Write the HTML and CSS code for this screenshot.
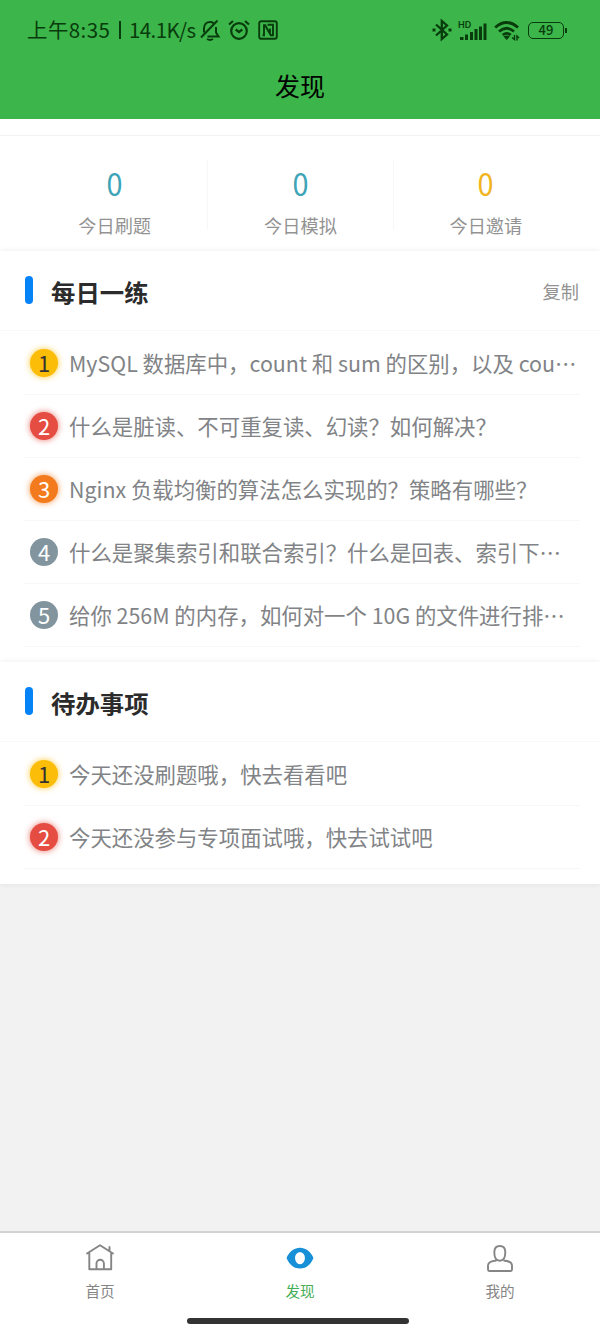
FILE: index.html
```html
<!DOCTYPE html>
<html lang="zh-CN">
<head>
<meta charset="utf-8">
<title>发现</title>
<link rel="stylesheet" href="styles.css">
</head>
<body>
<div class="app">
  <header class="top">
    <div class="status">
      <div class="status-left">
        <span class="time">上午8:35</span><span class="bar"></span><span class="speed">14.1K/s</span>
        <svg class="ic-bell" width="20" height="22" viewBox="0 0 20 22" fill="none" stroke="currentColor" stroke-width="2"><path d="M1 18.500 17.500 1.500M4 13.500V9.500C4 5.500 6.500 3 10 3c1.500 0 2.600.4 3.600 1.200M16 8v5.500l2.500 4H7.500"/><path d="M7 20q3 1.800 6 0" stroke-width="2"/></svg>
        <svg class="ic-alarm" width="22" height="22" viewBox="0 0 22 22" fill="none" stroke="currentColor" stroke-width="2.200"><circle cx="11" cy="12" r="7.800"/><path d="M7.700 10.500 11 13l3.300-2.500M1 5.500 5 2M17 2l4 3.500"/></svg>
        <svg class="ic-nfc" width="20" height="20" viewBox="0 0 20 20" fill="none" stroke="currentColor" stroke-width="1.900"><rect x="1.200" y="1.200" width="17.600" height="17.600" rx="2"/><path d="M4.500 15.300H6V5.200h1.200L12 14V8.500M9.500 4.800H15v10.500h-2.200L8.500 8"/></svg>
      </div>
      <div class="status-right">
        <svg class="ic-bt" width="20" height="22" viewBox="0 0 20 22" fill="none" stroke="currentColor" stroke-width="2.300"><path d="m4 5.500 11 10L9.800 20V2L15 6.500 4 16.500"/><path d="M.5 11h3M16.500 11h3" stroke-width="3"/></svg>
        <svg class="ic-signal" width="29" height="21" viewBox="0 0 29 21" fill="currentColor"><text class="hd" x="0" y="8">HD</text><path d="M2 17h3.500v3H2zM7 14.500h3V20H7zM12 12h3v8h-3zM16.500 9h3v11h-3zM21 6.500h3V20h-3zM25.500 3.500h3V20h-3z"/></svg>
        <svg class="ic-wifi" width="26" height="21" viewBox="0 0 26 21" fill="none" stroke="currentColor" stroke-width="2.800"><path d="M1.200 7.500Q12.500-2.500 24 7.500M5 11.500q7.500-6.500 15 0M8.700 15q4-3.200 8 0"/><path d="m9.500 16.500 3.200 3.500 3.200-3.500q-3.200-1.800-6.400 0z" fill="currentColor" stroke="none"/><path d="M20.500 15v4.500L18 17.500M23 20.500V16l2 2" stroke-width="1.400"/></svg>
        <span class="battery"><span class="cell">49</span><span class="tip"></span></span>
      </div>
    </div>
    <h1 class="title">发现</h1>
  </header>
  <main class="content">
    <section class="stats">
      <div class="stat"><b class="num teal">0</b><span class="label">今日刷题</span></div>
      <div class="stat"><b class="num teal">0</b><span class="label">今日模拟</span></div>
      <div class="stat"><b class="num gold">0</b><span class="label">今日邀请</span></div>
    </section>
    <section class="card">
      <div class="card-head"><i class="mark"></i><h2>每日一练</h2><span class="copy">复制</span></div>
      <ol class="list">
        <li><span class="badge b1">1</span><span class="txt">MySQL 数据库中，count 和 sum 的区别，以及 cou…</span></li>
        <li><span class="badge b2">2</span><span class="txt">什么是脏读、不可重复读、幻读？如何解决？</span></li>
        <li><span class="badge b3">3</span><span class="txt">Nginx 负载均衡的算法怎么实现的？策略有哪些？</span></li>
        <li><span class="badge">4</span><span class="txt">什么是聚集索引和联合索引？什么是回表、索引下…</span></li>
        <li><span class="badge">5</span><span class="txt">给你 256M 的内存，如何对一个 10G 的文件进行排…</span></li>
      </ol>
    </section>
    <section class="card">
      <div class="card-head"><i class="mark"></i><h2>待办事项</h2></div>
      <ol class="list">
        <li><span class="badge b1">1</span><span class="txt">今天还没刷题哦，快去看看吧</span></li>
        <li><span class="badge b2">2</span><span class="txt">今天还没参与专项面试哦，快去试试吧</span></li>
      </ol>
    </section>
  </main>
  <footer class="foot">
    <nav class="tabs">
      <div class="tab"><svg width="30" height="28" viewBox="0 0 30 28" fill="none" stroke="currentColor" stroke-width="1.900" stroke-linejoin="round" stroke-linecap="round"><path d="M2 9.500 15 1.200 28 9.500M4.300 9v16.300h21.900V9M24.500 7V3M11.500 25v-5.500a3.700 3.700 0 0 1 7.400 0V25"/></svg><span>首页</span></div>
      <div class="tab on"><svg width="30" height="28" viewBox="0 0 30 28"><path fill="#1890d7" fill-rule="evenodd" d="M1.500 14C4.500 7 9.500 3.700 15 3.700S25.500 7 28.500 14C25.500 21.500 20.500 24.500 15 24.500S4.500 21.500 1.500 14zM15 8.300c-3 0-4.900 2.500-4.900 5.700s1.900 6.200 4.900 6.200 4.900-3 4.900-6.200-1.900-5.700-4.900-5.700z"/></svg><span>发现</span></div>
      <div class="tab"><svg width="30" height="28" viewBox="0 0 30 28" fill="none" stroke="currentColor" stroke-width="1.900" stroke-linejoin="round"><path d="M9.300 8.300c0-4 2-6.300 5.500-6.300s5.500 2.300 5.500 6.300c0 4.500-1.600 8.500-5.500 8.500s-5.500-4-5.500-8.500zM11.500 16.500C6 17 3 18.500 3 21.500v4q0 1.500 1.500 1.500h21q1.500 0 1.500-1.500v-4c0-3-3-4.500-8.500-5"/></svg><span>我的</span></div>
    </nav>
    <div class="home"></div>
  </footer>
</div>
</body>
</html>
```

FILE: styles.css
```css
* { box-sizing: border-box; }
body { margin: 0; font-family: "Noto Sans CJK SC", sans-serif; font-weight: 400; background: #f2f2f2; }
h1, h2, ol { margin: 0; padding: 0; font-weight: 400; }
svg { display: block; flex: none; overflow: visible; }
.app { width: 600px; height: 1333px; display: flex; flex-direction: column; background: #f2f2f2; overflow: hidden; }
.top { height: 119px; background: #3cb54a; flex: none; }
.status { height: 60px; padding: 0 33px 0 27px; display: flex; justify-content: space-between; align-items: center; color: #083c0c; }
.status-left, .status-right { display: flex; align-items: center; }
.time, .speed { font-size: 20.5px; line-height: 28px; margin-top: -2px; white-space: nowrap; }
.time { width: 84px; letter-spacing: 0.4px; }
.speed { width: 67px; letter-spacing: -0.6px; }
.bar { width: 2px; height: 18px; margin: 0 8px; background: currentColor; }
.ic-bell { margin-left: 4px; }
.ic-alarm { margin-left: 8px; }
.ic-nfc { margin-left: 8px; }
.ic-signal { margin-left: 6px; }
.ic-wifi { margin-left: 7px; }
.ic-bt { margin-left: 1px; }
.hd { font: 600 9px "Inter", sans-serif; }
.battery { margin-left: 8px; display: flex; align-items: center; }
.cell { width: 36px; height: 17px; border: 1.5px solid; border-radius: 5px; font: 500 13px/14px "Noto Sans CJK SC", sans-serif; text-align: center; }
.tip { width: 2px; height: 5px; margin-left: 1px; background: currentColor; }
.title { height: 54px; font-size: 25px; line-height: 50px; text-align: center; color: #000; }
.content { flex: 1; }
.stats { height: 132px; background: #fff; padding: 41px 22px 0; display: flex; background-image: linear-gradient(#f2f2f2, #f2f2f2); background-size: 100% 1px; background-position: 0 16px; background-repeat: no-repeat; }
.stat { width: 185.500px; height: 70px; display: flex; flex-direction: column; align-items: center; }
.stat + .stat { border-left: 1px solid #f7f7f7; }
.num { font-size: 31px; font-weight: 400; line-height: 46px; transform: scaleX(0.93); }
.teal { color: #3ea5b8; }
.gold { color: #f0b51d; }
.label { font-size: 18.200px; line-height: 28px; margin-top: 5px; color: #939393; }
.label, .copy { white-space: nowrap; }
.card { background: #fff; padding-top: 1px; padding-bottom: 15px; box-shadow: 0 0 6px #00000014; }
.card-head { height: 79px; padding: 1px 21px 0 25px; display: flex; align-items: center; border-bottom: 1px solid #f8f8f8; }
.mark { width: 8px; height: 28px; border-radius: 4px; background: #0583f7; margin-top: -4px; }
h2 { margin-left: 18px; font-size: 24.400px; font-weight: 700; line-height: 36px; color: #2b2b2b; }
.copy { margin-left: auto; font-size: 18.200px; color: #939393; margin-top: -1px; }
.list { list-style: none; margin-left: 24px; margin-right: 20px; padding-top: 0.5px; }
.list li { height: 63.200px; display: flex; align-items: center; border-bottom: 1px solid #f7f7f7; padding-left: 6px; }
.badge { width: 28px; height: 28px; border-radius: 50%; background: #82959f; color: #fff; font-size: 22px; line-height: 27px; text-align: center; flex: none; }
.b1 { background: #fbbd08; color: #333; box-shadow: 0 0 6px #fbbd08cc; }
.b2 { background: #e54d42; box-shadow: 0 0 6px #e54d42cc; }
.b3 { background: #f37b1d; box-shadow: 0 0 6px #f37b1dcc; }
.txt { margin-left: 11px; font-size: 21.400px; line-height: 32px; color: #818386; white-space: nowrap; }
.foot { height: 102px; background: #fff; border-top: 2px solid #d2d2d2; flex: none; }
.tabs { display: flex; height: 84px; }
.tab { flex: 1; display: flex; flex-direction: column; align-items: center; padding-top: 11px; color: #858585; font-size: 14.600px; line-height: 22px; }
.tab span { margin-top: 8px; }
.tab.on { color: #45ad57; }
.home { width: 222px; height: 6px; margin: 1px 0 0 187px; border-radius: 3px; background: #333; }
```
